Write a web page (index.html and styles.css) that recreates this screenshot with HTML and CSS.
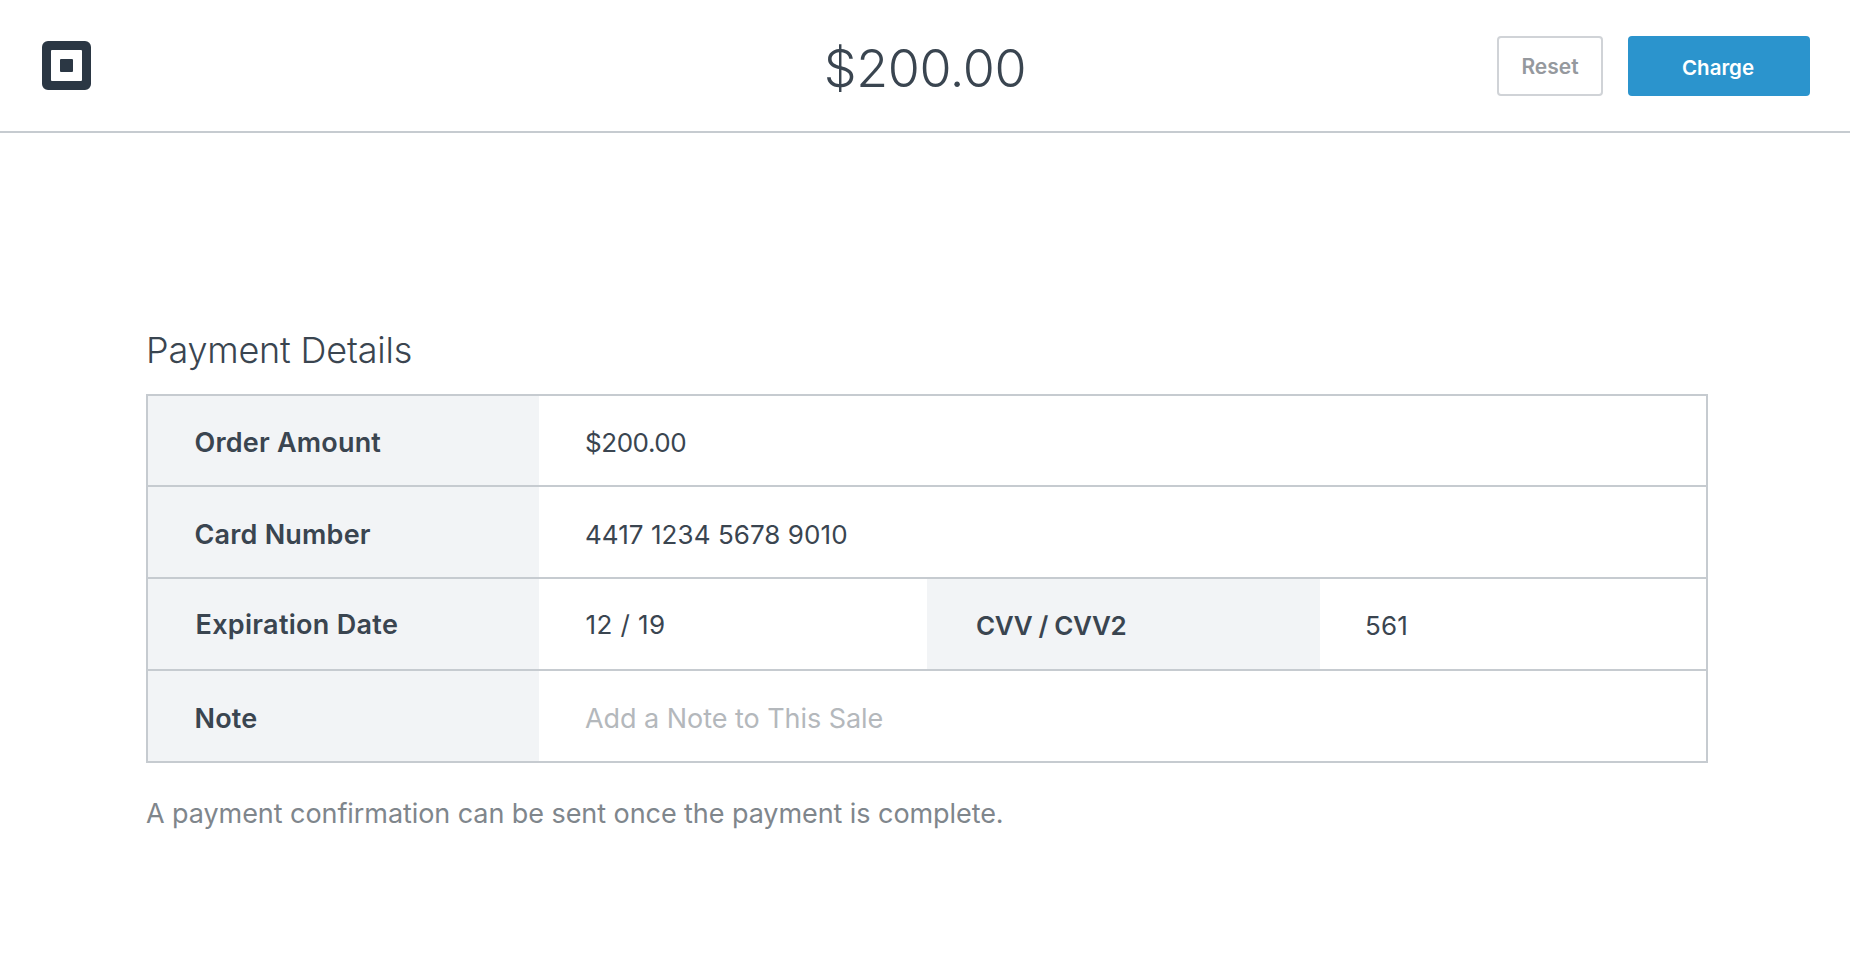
FILE: index.html
```html
<!DOCTYPE html>
<html lang="en">
<head>
  <meta charset="UTF-8">
  <title>Payment Details</title>
  <link rel="stylesheet" href="styles.css">
</head>
<body>
  <header class="topbar">
    <svg class="logo" viewBox="0 0 49 49" aria-label="Square">
      <path fill-rule="evenodd" fill="#2b3744" d="M6 0h37a6 6 0 0 1 6 6v37a6 6 0 0 1-6 6H6a6 6 0 0 1-6-6V6a6 6 0 0 1 6-6zM10 9a1 1 0 0 0-1 1v29a1 1 0 0 0 1 1h29a1 1 0 0 0 1-1V10a1 1 0 0 0-1-1z"/>
      <rect x="18" y="18" width="13" height="13" rx="1" fill="#2b3744"/>
    </svg>
    <div class="total">$200.00</div>
    <div class="actions">
      <button class="btn btn-reset">Reset</button>
      <button class="btn btn-charge">Charge</button>
    </div>
  </header>

  <main class="content">
    <h2 class="title">Payment Details</h2>
    <div class="details">
      <div class="row">
        <div class="label">Order Amount</div>
        <div class="value value-amount">$200.00</div>
      </div>
      <div class="row">
        <div class="label">Card Number</div>
        <div class="value value-card">4417 1234 5678 9010</div>
      </div>
      <div class="row">
        <div class="label label-exp">Expiration Date</div>
        <div class="value value-half">12 / 19</div>
        <div class="label label-cvv">CVV / CVV2</div>
        <div class="value value-cvv">561</div>
      </div>
      <div class="row">
        <div class="label">Note</div>
        <div class="value placeholder">Add a Note to This Sale</div>
      </div>
    </div>
    <p class="hint">A payment confirmation can be sent once the payment is complete.</p>
  </main>
</body>
</html>
```

FILE: styles.css
```css
:root {
  --ink: #3a4550;
  --line: #c6cbd0;
  --label-bg: #f2f4f6;
  --blue: #2b94cd;
}

* {
  box-sizing: border-box;
  margin: 0;
  padding: 0;
  font-family: "Inter", "Liberation Sans", sans-serif;
}

body {
  background: #fff;
  color: var(--ink);
}

/* Barra superior */
.topbar {
  height: 133px;
  padding: 36px 40px 0 42px;
  border-bottom: 2px solid var(--line);
  display: grid;
  grid-template-columns: 1fr auto 1fr;
  align-items: start;
}

.logo {
  width: 49px;
  height: 49px;
  margin-top: 5px;
  display: block;
}

.total {
  font-size: 52px;
  font-weight: 300;
  line-height: 64px;
  margin: 1px 2px 0 0;
  letter-spacing: -0.4px;
}

.actions {
  display: flex;
  justify-content: flex-end;
  gap: 25px;
}

.btn {
  height: 60px;
  border-radius: 4px;
  font-size: 21px;
  font-weight: 600;
}

.btn-reset {
  width: 106px;
  background: #fff;
  border: 2px solid #d0d3d7;
  color: #95999e;
}

.btn-charge {
  width: 182px;
  padding: 2px 2px 0 0;
  background: var(--blue);
  border: none;
  color: #fff;
  font-size: 20.5px;
}

/* Conteúdo */
.content {
  padding: 195px 142px 0 146px;
}

.title {
  font-size: 36px;
  font-weight: 300;
  line-height: 44px;
  margin-bottom: 22px;
  letter-spacing: -0.2px;
}

.details {
  border: 2px solid var(--line);
}

.row {
  display: flex;
  height: 92px;
  border-bottom: 2px solid var(--line);
}

.row:first-child {
  height: 91px;
}

.row:last-child {
  height: 90px;
  border-bottom: none;
}

.label,
.value {
  display: flex;
  align-items: center;
  font-size: 26px;
}

.label {
  width: 391px;
  flex: none;
  padding: 4px 0 0 46.5px;
  background: var(--label-bg);
  font-size: 27px;
  font-weight: 600;
  letter-spacing: 0.2px;
}

.value {
  flex: 1;
  padding: 4px 0 0 46px;
}

.value-amount {
  letter-spacing: -0.45px;
}

.value-card {
  letter-spacing: 0.06px;
}

.value-half {
  flex: none;
  width: 388px;
  padding: 0 0 0 46.5px;
  letter-spacing: 0.4px;
}

.label-exp {
  padding: 0 0 0 47.5px;
  letter-spacing: 0.3px;
}

.label-cvv {
  width: 393px;
  padding: 2px 0 0 49px;
  font-size: 26px;
  letter-spacing: -0.35px;
}

.value-cvv {
  padding: 2px 0 0 45px;
  letter-spacing: 0.1px;
}

.placeholder {
  font-size: 27px;
  letter-spacing: -0.05px;
  color: #b4b8bc;
}

.hint {
  margin-top: 35px;
  font-size: 27px;
  line-height: 32px;
  letter-spacing: -0.07px;
  color: #7f868c;
}
```
